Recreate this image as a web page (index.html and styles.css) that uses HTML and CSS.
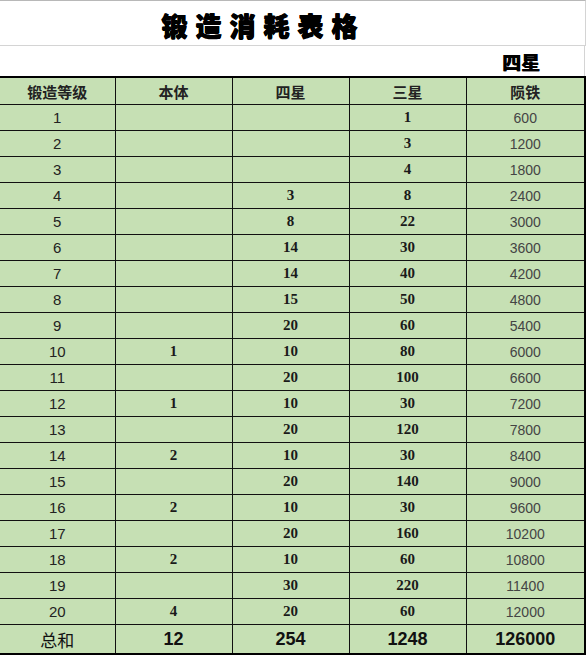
FILE: index.html
```html
<!DOCTYPE html>
<html lang="zh">
<head>
<meta charset="utf-8">
<title>锻造消耗表格</title>
<link rel="stylesheet" href="styles.css">
</head>
<body>
<div class="sheet">
  <div class="title-row"><h1 class="title">锻造消耗表格</h1></div>
  <div class="sub-row"><span class="sub">四星</span></div>
  <table class="grid">
    <colgroup><col class="c1"><col class="c2"><col class="c3"><col class="c4"><col class="c5"></colgroup>
    <thead>
      <tr><th>锻造等级</th><th>本体</th><th>四星</th><th>三星</th><th>陨铁</th></tr>
    </thead>
    <tbody>
      <tr><td class="lv">1</td><td class="b"></td><td class="b"></td><td class="b">1</td><td class="iron">600</td></tr>
      <tr><td class="lv">2</td><td class="b"></td><td class="b"></td><td class="b">3</td><td class="iron">1200</td></tr>
      <tr><td class="lv">3</td><td class="b"></td><td class="b"></td><td class="b">4</td><td class="iron">1800</td></tr>
      <tr><td class="lv">4</td><td class="b"></td><td class="b">3</td><td class="b">8</td><td class="iron">2400</td></tr>
      <tr><td class="lv">5</td><td class="b"></td><td class="b">8</td><td class="b">22</td><td class="iron">3000</td></tr>
      <tr><td class="lv">6</td><td class="b"></td><td class="b">14</td><td class="b">30</td><td class="iron">3600</td></tr>
      <tr><td class="lv">7</td><td class="b"></td><td class="b">14</td><td class="b">40</td><td class="iron">4200</td></tr>
      <tr><td class="lv">8</td><td class="b"></td><td class="b">15</td><td class="b">50</td><td class="iron">4800</td></tr>
      <tr><td class="lv">9</td><td class="b"></td><td class="b">20</td><td class="b">60</td><td class="iron">5400</td></tr>
      <tr><td class="lv">10</td><td class="b">1</td><td class="b">10</td><td class="b">80</td><td class="iron">6000</td></tr>
      <tr><td class="lv">11</td><td class="b"></td><td class="b">20</td><td class="b">100</td><td class="iron">6600</td></tr>
      <tr><td class="lv">12</td><td class="b">1</td><td class="b">10</td><td class="b">30</td><td class="iron">7200</td></tr>
      <tr><td class="lv">13</td><td class="b"></td><td class="b">20</td><td class="b">120</td><td class="iron">7800</td></tr>
      <tr><td class="lv">14</td><td class="b">2</td><td class="b">10</td><td class="b">30</td><td class="iron">8400</td></tr>
      <tr><td class="lv">15</td><td class="b"></td><td class="b">20</td><td class="b">140</td><td class="iron">9000</td></tr>
      <tr><td class="lv">16</td><td class="b">2</td><td class="b">10</td><td class="b">30</td><td class="iron">9600</td></tr>
      <tr><td class="lv">17</td><td class="b"></td><td class="b">20</td><td class="b">160</td><td class="iron">10200</td></tr>
      <tr><td class="lv">18</td><td class="b">2</td><td class="b">10</td><td class="b">60</td><td class="iron">10800</td></tr>
      <tr><td class="lv">19</td><td class="b"></td><td class="b">30</td><td class="b">220</td><td class="iron">11400</td></tr>
      <tr><td class="lv">20</td><td class="b">4</td><td class="b">20</td><td class="b">60</td><td class="iron">12000</td></tr>
    </tbody>
    <tfoot>
      <tr><td class="sum-label">总和</td><td class="sum">12</td><td class="sum">254</td><td class="sum">1248</td><td class="sum">126000</td></tr>
    </tfoot>
  </table>
</div>
</body>
</html>
```
FILE: styles.css
```css
html, body {
  margin: 0;
  padding: 0;
  background: #ffffff;
}
body {
  font-family: "Liberation Sans", "Noto Sans CJK SC", sans-serif;
  color: #1a1a1a;
}
.sheet {
  width: 586px;
}
.title-row {
  height: 44px;
  border-top: 1px solid #b8b8b8;
  border-bottom: 1px solid #d4d4d4;
  border-right: 1px solid #d4d4d4;
  display: flex;
  align-items: center;
  justify-content: center;
  padding-right: 58px;
  box-sizing: content-box;
  width: 527px;
}
.title {
  margin: 0;
  font-family: "Noto Sans CJK SC", sans-serif;
  font-weight: 900;
  font-size: 26px;
  letter-spacing: 8px;
  color: #000;
  text-shadow: 0.6px 0 0 #000, -0.6px 0 0 #000, 0 0.6px 0 #000;
  line-height: 1;
  padding-top: 3px;
}
.sub-row {
  height: 30px;
  border-right: 1px solid #d4d4d4;
  width: 585px;
  display: flex;
  align-items: center;
  justify-content: flex-end;
  padding-right: 44px;
  padding-top: 1px;
  box-sizing: border-box;
}
.sub {
  font-family: "Noto Sans CJK SC", sans-serif;
  font-weight: 900;
  font-size: 19px;
  color: #000;
  text-shadow: 0.4px 0 0 #000;
  line-height: 1;
}
.grid {
  border-collapse: collapse;
  table-layout: fixed;
  width: 585px;
  background: #c6e0b4;
}
.c1 { width: 115px; }
.c2, .c3, .c4 { width: 117px; }
.c5 { width: 119px; }
.grid th, .grid td {
  border: 1px solid #111;
  padding: 0;
  text-align: center;
  vertical-align: middle;
}
.grid tr > :first-child { border-left: none; }
.grid tr > :last-child { border-right: 2px solid #000; }
.grid thead th {
  border-top: 2px solid #000;
  height: 26px;
  font-family: "Noto Sans CJK SC", sans-serif;
  font-weight: 700;
  font-size: 15px;
  color: #222;
  line-height: 1;
}
.grid tbody td {
  height: 25px;
  line-height: 1;
}
.lv {
  font-family: "Liberation Sans", sans-serif;
  font-size: 15px;
  color: #222;
}
.b {
  font-family: "Liberation Serif", serif;
  font-weight: 700;
  font-size: 15px;
  color: #1a1a1a;
}
.iron {
  font-family: "Liberation Sans", sans-serif;
  font-size: 14px;
  color: #444;
}
.grid tfoot td {
  height: 28px;
  border-bottom: 2px solid #000;
  line-height: 1;
}
.sum-label {
  font-family: "Noto Sans CJK SC", sans-serif;
  font-size: 17px;
  color: #111;
}
.sum {
  font-family: "Liberation Sans", sans-serif;
  font-weight: 700;
  font-size: 18px;
  color: #111;
}
```
